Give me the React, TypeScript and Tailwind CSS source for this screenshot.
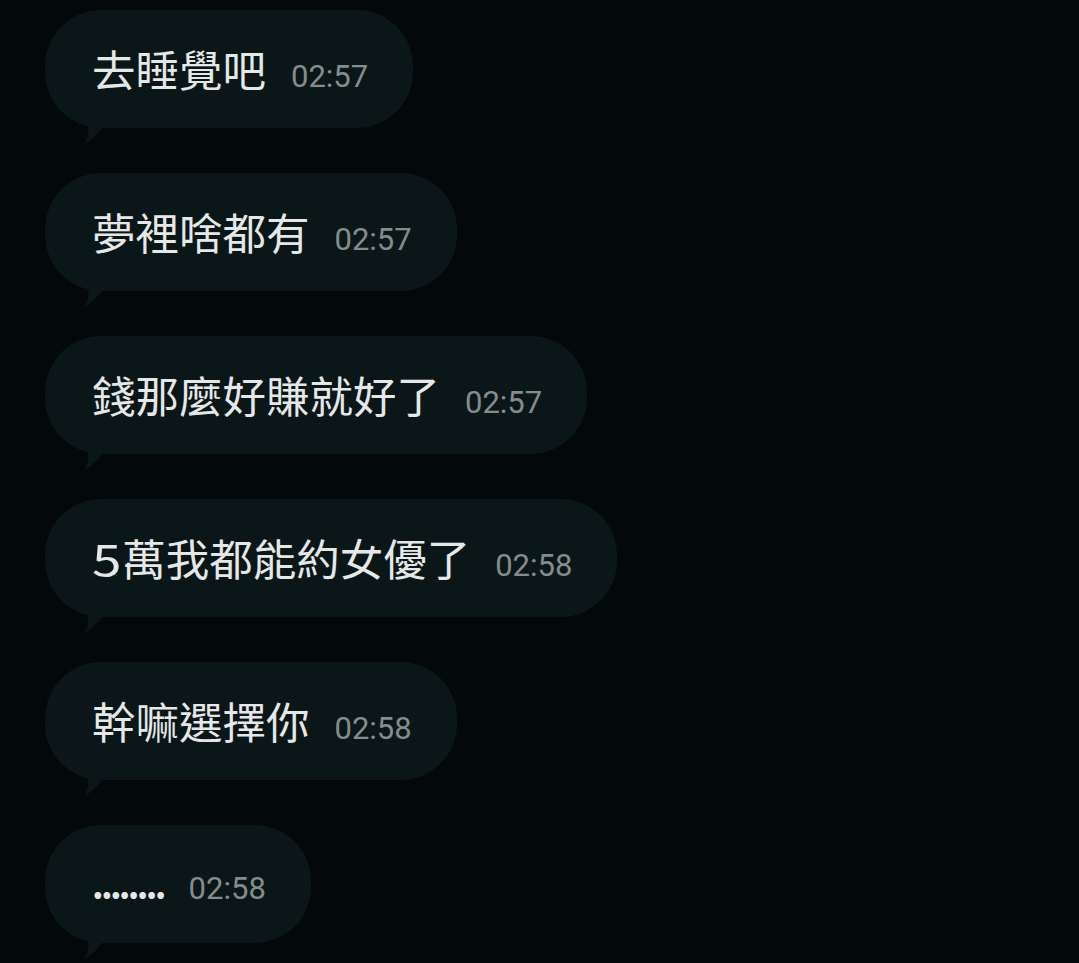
const messages = [
  { text: "去睡覺吧", time: "02:57" },
  { text: "夢裡啥都有", time: "02:57" },
  { text: "錢那麼好賺就好了", time: "02:57" },
  { lead: "5", text: "萬我都能約女優了", time: "02:58" },
  { text: "幹嘛選擇你", time: "02:58" },
  { text: "........", time: "02:58", dots: true },
];

function Tail() {
  return (
    <svg
      className="absolute left-[39px] top-[117px]"
      width="20"
      height="18"
      viewBox="0 0 20 18"
    >
      <path d="M4 0 Q5.5 10 0 17.5 Q10 12 19 0 Z" fill="#0b1618" />
    </svg>
  );
}

interface BubbleProps {
  lead?: string;
  text: string;
  time: string;
  dots?: boolean;
}

function Bubble({ lead, text, time, dots }: BubbleProps) {
  return (
    <div className="relative self-start">
      <div className="flex h-[118px] items-center rounded-[56px] bg-[#0b1618] pl-[47px] pr-[45px]">
        <div className="flex items-baseline gap-[25px]">
          <span
            className={`leading-none text-[#e6e8e8] ${dots ? "text-[36px] font-semibold tracking-[-2.75px]" : "text-[43.5px]"}`}
            style={{ fontFamily: '"Noto Sans CJK TC", "Noto Sans CJK SC", sans-serif' }}
          >
            {lead && <span className="mr-[6px] inline-block origin-left scale-x-[1.22]">{lead}</span>}
            {text}
          </span>
          <span className="font-['Roboto',sans-serif] text-[31px] leading-none text-[#868c8d]">
            {time}
          </span>
        </div>
      </div>
      <Tail />
    </div>
  );
}

export default function App() {
  return (
    <div className="min-h-screen w-full bg-[#030808] pl-[45px] pt-[10px]">
      <div className="flex flex-col gap-[45px]">
        {messages.map((m, i) => (
          <Bubble key={i} lead={m.lead} text={m.text} time={m.time} dots={m.dots} />
        ))}
      </div>
    </div>
  );
}
